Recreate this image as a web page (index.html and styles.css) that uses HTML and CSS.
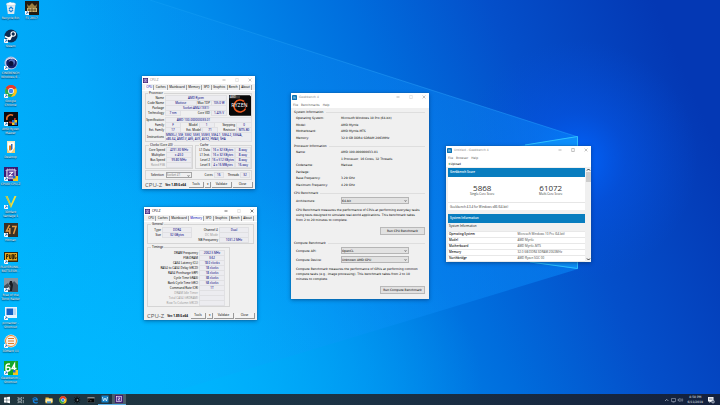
FILE: index.html
```html
<!DOCTYPE html>
<html lang="en">
<head>
<meta charset="utf-8">
<title>Desktop</title>
<link rel="stylesheet" href="styles.css">
</head>
<body>
<svg class="defs" aria-hidden="true">
  <defs>
    <symbol id="arrow" viewBox="0 0 4 4"><rect width="4" height="4" fill="#fff"/><path d="M.8 3.4 2.8 1.2M1.4 1h1.6v1.6" fill="none" stroke="#1767b5" stroke-width=".8"/></symbol>
    <symbol id="min" viewBox="0 0 6 6"><path d="M1.5 3h3" stroke="currentColor" stroke-width=".6"/></symbol>
    <symbol id="max" viewBox="0 0 6 6"><path d="M1.7 1.5h2.6v3H1.7z" fill="none" stroke="currentColor" stroke-width=".5"/></symbol>
    <symbol id="close" viewBox="0 0 6 6"><path d="m1.6 1.6 2.8 2.8m0-2.8L1.6 4.4" stroke="currentColor" stroke-width=".5"/></symbol>
    <symbol id="cpuz" viewBox="0 0 12 12"><rect width="12" height="12" fill="#3b1a70"/><path d="M3 1v10M5 1v10M7 1v10M9 1v10M1 3h10M1 9h10" stroke="#a98fd0" stroke-width=".5"/><rect x="2.5" y="2.5" width="7" height="7" fill="#5a3496" stroke="#fff" stroke-width=".8"/><path d="M4.5 4.5h3l-3 3h3" fill="none" stroke="#fff" stroke-width=".9"/></symbol>
    <symbol id="gb" viewBox="0 0 12 12"><rect width="12" height="12" rx="1" fill="#0b73b5"/><path d="M7.5 2.5 3.5 9M4 3v4h5M7.5 5v5" stroke="#bfe6ff" stroke-width="1" fill="none"/></symbol>
    <symbol id="chrome" viewBox="0 0 24 24"><circle cx="12" cy="12" r="11" fill="#fbc116"/><path d="M12 12 2.5 6.5A11 11 0 0 1 21.5 6.5z" fill="#e33b2e"/><path d="M12 12 2.5 6.5A11 11 0 0 0 12 23l5-8z" fill="#2da94f"/><path d="M12 7h9.8l-.6-1.2A11 11 0 0 0 3 6l4.500 7z" fill="#e33b2e"/><circle cx="12" cy="12" r="5.4" fill="#fff"/><circle cx="12" cy="12" r="4.2" fill="#4285f4"/></symbol>
  </defs>
</svg>
<main class="desktop">
  <svg class="wallpaper" viewBox="0 0 720 405" preserveAspectRatio="none" aria-hidden="true">
    <defs>
      <linearGradient id="base" x1="0" y1=".62" x2="1" y2=".38">
        <stop offset="0" stop-color="#00b3fc"/><stop offset=".2" stop-color="#00a6f8"/><stop offset=".4" stop-color="#008bec"/><stop offset=".6" stop-color="#006ddd"/><stop offset=".78" stop-color="#044fca"/><stop offset="1" stop-color="#0438b4"/>
      </linearGradient>
      <radialGradient id="low" cx=".12" cy=".95" r=".55"><stop offset="0" stop-color="#00b9ff"/><stop offset="1" stop-color="#00b9ff" stop-opacity="0"/></radialGradient>
      <radialGradient id="glow" gradientUnits="userSpaceOnUse" cx="578" cy="160" r="120"><stop offset="0" stop-color="#0066ff" stop-opacity=".95"/><stop offset=".4" stop-color="#0556ea" stop-opacity=".5"/><stop offset="1" stop-color="#0550dc" stop-opacity="0"/></radialGradient>
      <linearGradient id="beam"><stop offset="0" stop-color="#19a9ff" stop-opacity="0"/><stop offset=".5" stop-color="#1595ff" stop-opacity=".16"/><stop offset="1" stop-color="#0890ff" stop-opacity=".5"/></linearGradient>
      <linearGradient id="ray" gradientUnits="userSpaceOnUse" x1="130" y1="0" x2="578" y2="0"><stop offset="0" stop-color="#3cc0ff" stop-opacity=".1"/><stop offset=".6" stop-color="#36b0ff" stop-opacity=".35"/><stop offset="1" stop-color="#20a0ff" stop-opacity=".5"/></linearGradient>
    </defs>
    <rect width="720" height="405" fill="url(#base)"/>
    <rect width="720" height="405" fill="url(#low)"/>
    <rect width="720" height="405" fill="url(#glow)"/>
    <path d="M150 0 578 137V269L130 405H0V0z" fill="url(#beam)"/>
    <path d="M150 0 578 137" fill="none" stroke="url(#ray)" stroke-width="1"/>
    <path d="M500 149 578 136V269L500 258z" fill="#12a0ff" fill-opacity=".6"/>
    <path d="M525 145 577.500 136.500V268.500L530 262" fill="none" stroke="#2fc1ff" stroke-width="1"/>
  </svg>

  <nav class="icons" aria-label="Desktop icons">
    <a class="shortcut" href="#"><svg viewBox="0 0 14 14"><path d="m2.500 3 1.300 10h6.400l1.300-10z" fill="#dfe9ef"/><ellipse cx="7" cy="3" rx="4.700" ry="1.600" fill="#fafcfd" stroke="#a9bdc8" stroke-width=".4"/><path d="m4 3 2-2 2 1.500L10 1.800l.4 1.500z" fill="#fff"/><path d="m5 8 2-2 2 2M9 9l-2 1.800L5 9" fill="none" stroke="#1a84dd" stroke-width="1.200"/></svg><span>Recycle Bin</span></a>
    <a class="shortcut" href="#"><svg viewBox="0 0 14 14"><circle cx="7" cy="7" r="6.500" fill="#0d2b52"/><circle cx="9.200" cy="5" r="2.200" fill="none" stroke="#fff" stroke-width="1.100"/><path d="M1 7.500 5.500 9.700 8 6.800" fill="none" stroke="#fff" stroke-width="1.800"/><circle cx="5.500" cy="9.500" r="1.700" fill="#fff"/><use href="#arrow" y="10" width="4" height="4"/></svg><span>Steam</span></a>
    <a class="shortcut" href="#"><svg viewBox="0 0 14 14"><circle cx="7" cy="7" r="6.500" fill="#aebfe4"/><circle cx="7.500" cy="7" r="5.300" fill="#15206b"/><circle cx="8" cy="6" r="3" fill="#5872bd"/><circle cx="7" cy="7.500" r="2.500" fill="#0b1038"/><path d="M2 4.500C6 1 11 2 13 5" fill="none" stroke="#f4f7ff" stroke-width="1"/><use href="#arrow" y="10" width="4" height="4"/></svg><span>CINEBENCH<br>Windows 6...</span></a>
    <a class="shortcut" href="#"><svg viewBox="0 0 14 14"><use href="#chrome" x="0.500" y="0.500" width="13" height="13"/><use href="#arrow" y="10" width="4" height="4"/></svg><span>Google<br>Chrome</span></a>
    <a class="shortcut" href="#"><svg viewBox="0 0 14 14"><path d="M0 0h14v14H0z" fill="#0c0b10"/><path d="M3 8a4 4 0 0 1 6-4.500" fill="none" stroke="#f0702a" stroke-width="1.600"/><path d="M11 6a4 4 0 0 1-6 4" fill="none" stroke="#d13023" stroke-width="1.600"/><path d="M8 8h5v5H8z" fill="#f4c51c"/><path d="M8 8h2.500v2.500H8zM10.500 10.500H13V13h-2.500z" fill="#1e6ed2"/><use href="#arrow" y="10" width="4" height="4"/></svg><span>AMD Ryzen<br>Master</span></a>
    <a class="shortcut" href="#"><svg viewBox="0 0 14 14"><path d="M3 1h8v12H3z" fill="#f5e9c4"/><path d="M4 2.500h6v9H4z" fill="#fff"/><path d="M5 5.500h2v5H5z" fill="#e48122"/><path d="M7 4h1.500v5L7 10.500z" fill="#3c6aa8"/><path d="m3 8 3 5H3zM11 7v6H7z" fill="#f1ce74"/></svg><span>Desktop</span></a>
    <a class="shortcut" href="#"><svg viewBox="0 0 14 14"><use href="#cpuz" width="14" height="14"/><path d="M9 9h5v5H9z" fill="#f4c51c"/><path d="M9 9h2.500v2.500H9z" fill="#1e6ed2"/><use href="#arrow" y="10" width="4" height="4"/></svg><span>CPUID CPU-Z</span></a>
    <a class="shortcut" href="#"><svg viewBox="0 0 14 14"><path d="M1.500 1 7 13l5.500-12h-2L7 9 3.500 1z" fill="#f3df3b"/><path d="m3 1 4 9v3L1.500 1z" fill="#b9c74b"/><use href="#arrow" y="10" width="4" height="4"/></svg><span>3DMark<br>Vantage 1</span></a>
    <a class="shortcut" href="#"><svg viewBox="0 0 14 14"><path d="M0 0h14v14H0z" fill="#3a3026"/><path d="M5.500 2 2.500 8h4M5.800 5v6M8 3.500h4L9.500 11" fill="none" stroke="#e59b45" stroke-width="1.500"/><use href="#arrow" y="10" width="4" height="4"/></svg><span>Hitman</span></a>
    <a class="shortcut" href="#"><svg viewBox="0 0 14 14"><path d="M0 2h14v10H0z" fill="#332a12"/><path d="M1 3h12v7.500H1z" fill="#e9a91e"/><path d="M2.500 9V4.500H4v2H2.500M5.500 4.500V8.500H7v-4M8.300 9V4.500h1.200V9zM12 4.500h-1.200v4H12V7" fill="none" stroke="#2a1d06" stroke-width=".9"/><use href="#arrow" y="10" width="4" height="4"/></svg><span>PLAYERUNK...<br>BATTLEGR...</span></a>
    <a class="shortcut" href="#"><svg viewBox="0 0 14 14"><path d="M0 0h14v14H0z" fill="#8796a1"/><path d="M0 8 4 5l2 4 4-6 4 4v7H0z" fill="#45525e"/><path d="M6 3h2l1 4-1 6H6l.5-5L5 6z" fill="#191d23"/><path d="m2 11 3-2 1 3z" fill="#dbe5ea"/><use href="#arrow" y="10" width="4" height="4"/></svg><span>Rise of the<br>Tomb Raider</span></a>
    <a class="shortcut" href="#"><svg viewBox="0 0 14 14"><path d="M1 1h12v11H1z" fill="#e8f2fb"/><path d="M2.500 2.500H9V9H2.500z" fill="#1762c4"/><path d="M9 2.500h3V9H9z" fill="#b9d9f5"/><use href="#arrow" y="10" width="4" height="4"/></svg><span>pcmarker -<br>Shortcut</span></a>
    <a class="shortcut" href="#"><svg viewBox="0 0 14 14"><circle cx="7" cy="7" r="6.500" fill="#f4f1e8"/><circle cx="7" cy="7" r="5.500" fill="none" stroke="#e98a35" stroke-width="1"/><path d="M4 4.500h6M4 7h6M4 9.500h6" stroke="#dd7b2b" stroke-width="1.200"/><use href="#arrow" y="10" width="4" height="4"/></svg><span>3DMark 11</span></a>
    <a class="shortcut" href="#"><svg viewBox="0 0 14 14"><path d="M0 0h14v14H0z" fill="#15a52b"/><path d="M6 3H4.500Q2 3 2 6v2.500Q2 10 4 10t2-2-2-1.800-2 1M10.500 10V3L8 7.500h4.500" fill="none" stroke="#fff" stroke-width="1.400"/><path d="M9 9h5v5H9z" fill="#f4c51c"/><path d="M9 9h2.500v2.500H9z" fill="#1e6ed2"/><use href="#arrow" y="10" width="4" height="4"/></svg><span>Geekbench -<br>Shortcut</span></a>
    <a class="shortcut" href="#"><svg viewBox="0 0 14 14"><path d="M0 0h14v14H0z" fill="#211b13"/><path d="m2 3 2 2 3-3 3 3 2-2-1 5H3z" fill="#9d8041"/><path d="M2 7h10v4H2z" fill="#c8b277"/><path d="M3 9h8M4 7.500v3M7 7v4M10 7.500v3" stroke="#4a3715" stroke-width=".7"/><use href="#arrow" y="10" width="4" height="4"/></svg><span>F1 2017</span></a>
  </nav>

  <section class="window cpuz first" aria-label="CPU-Z processor">
    <header class="title idle"><svg class="app"><use href="#cpuz"/></svg><span>CPU-Z</span><svg class="ctl"><use href="#min"/></svg><svg class="ctl faint"><use href="#max"/></svg><svg class="ctl"><use href="#close"/></svg></header>
    <div class="tabs"><button class="on">CPU</button><button>Caches</button><button>Mainboard</button><button>Memory</button><button>SPD</button><button>Graphics</button><button>Bench</button><button>About</button></div>
    <fieldset class="processor">
      <legend>Processor</legend>
      <div class="identity">
        <div class="lines">
          <div class="line"><label>Name</label><output class="grow">AMD Ryzen</output></div>
          <div class="line"><label>Code Name</label><output class="grow">Matisse</output><span>Max TDP</span><output class="small">105.0 W</output></div>
          <div class="line"><label>Package</label><output class="grow">Socket AM4 (1331)</output></div>
          <div class="line"><label>Technology</label><output class="small">7 nm</output><span class="push">Core VID</span><output class="small">1.425 V</output></div>
        </div>
        <svg class="ryzen" viewBox="0 0 66 62" role="img" aria-label="AMD Ryzen"><path d="M0 0h62l4 4v58H4l-4-4z" fill="#090909"/><path d="M0 0h33v10H0z" fill="#3a3a3a"/><text x="3" y="8" font-size="8" fill="#fff">AMD</text><path d="M45 19a18 18 0 1 0 4 22" fill="none" stroke="#ed5a20" stroke-width="5"/><path d="M45 19a18 18 0 0 1 4 22" fill="none" stroke="#b82f12" stroke-width="3"/><text x="7" y="37" font-size="16" fill="#fff">RYZEN</text></svg>
      </div>
      <div class="line gap"><label>Specification</label><output class="grow spec">AMD 100-000000033-01</output></div>
      <div class="line"><label>Family</label><output class="small">F</output><span class="push">Model</span><output class="small">1</output><span class="push">Stepping</span><output class="small">0</output></div>
      <div class="line"><label>Ext. Family</label><output class="small">17</output><span class="push">Ext. Model</span><output class="small">71</output><span class="push">Revision</span><output class="small">MTS-B0</output></div>
      <div class="line tall"><label>Instructions</label><output class="grow wrap">MMX(+), SSE, SSE2, SSE3, SSSE3, SSE4.1, SSE4.2, SSE4A,<br>x86-64, AMD-V, AES, AVX, AVX2, FMA3, SHA</output></div>
    </fieldset>
    <div class="pair">
      <fieldset class="clocks"><legend>Clocks (Core #0)</legend>
        <div class="line"><label>Core Speed</label><output class="grow">4291.30 MHz</output></div>
        <div class="line"><label>Multiplier</label><output class="grow">x 43.0</output></div>
        <div class="line"><label>Bus Speed</label><output class="grow">99.80 MHz</output></div>
        <div class="line off"><label>Rated FSB</label><output class="grow"></output></div>
      </fieldset>
      <fieldset class="cache"><legend>Cache</legend>
        <div class="line"><label>L1 Data</label><output class="grow">16 x 32 KBytes</output><output class="small">8-way</output></div>
        <div class="line"><label>L1 Inst.</label><output class="grow">16 x 32 KBytes</output><output class="small">8-way</output></div>
        <div class="line"><label>Level 2</label><output class="grow">16 x 512 KBytes</output><output class="small">8-way</output></div>
        <div class="line"><label>Level 3</label><output class="grow">4 x 16 MBytes</output><output class="small">16-way</output></div>
      </fieldset>
    </div>
    <div class="selection"><label for="socket">Selection</label><span class="pick"><select id="socket" disabled><option>Socket #1</option></select></span><span class="push">Cores</span><output>16</output><span class="threads">Threads</span><output>32</output></div>
    <footer class="bar"><strong>CPU-Z</strong><span>Ver. 1.89.0.x64</span><button>Tools</button><button class="drop" aria-label="More tools">▾</button><button class="wide">Validate</button><button class="wide">Close</button></footer>
  </section>

  <section class="window cpuz second" aria-label="CPU-Z memory">
    <header class="title"><svg class="app"><use href="#cpuz"/></svg><span>CPU-Z</span><svg class="ctl"><use href="#min"/></svg><svg class="ctl faint"><use href="#max"/></svg><svg class="ctl"><use href="#close"/></svg></header>
    <div class="tabs"><button>CPU</button><button>Caches</button><button>Mainboard</button><button class="on">Memory</button><button>SPD</button><button>Graphics</button><button>Bench</button><button>About</button></div>
    <fieldset class="general"><legend>General</legend>
      <div class="line"><label>Type</label><output>DDR4</output><span class="push">Channel #</span><output>Dual</output></div>
      <div class="line"><label>Size</label><output>32 GBytes</output><span class="push off">DC Mode</span><output></output></div>
      <div class="line"><span class="push">NB Frequency</span><output>1031.2 MHz</output></div>
    </fieldset>
    <fieldset class="timings"><legend>Timings</legend>
      <div class="line"><label>DRAM Frequency</label><output>2062.5 MHz</output></div>
      <div class="line"><label>FSB:DRAM</label><output>3:62</output></div>
      <div class="line"><label>CAS# Latency (CL)</label><output>18.0 clocks</output></div>
      <div class="line"><label>RAS# to CAS# Delay (tRCD)</label><output>18 clocks</output></div>
      <div class="line"><label>RAS# Precharge (tRP)</label><output>18 clocks</output></div>
      <div class="line"><label>Cycle Time (tRAS)</label><output>38 clocks</output></div>
      <div class="line"><label>Bank Cycle Time (tRC)</label><output>58 clocks</output></div>
      <div class="line"><label>Command Rate (CR)</label><output>1T</output></div>
      <div class="line off"><label>DRAM Idle Timer</label><output></output></div>
      <div class="line off"><label>Total CAS# (tRDRAM)</label><output></output></div>
      <div class="line off"><label>Row To Column (tRCD)</label><output></output></div>
    </fieldset>
    <footer class="bar"><strong>CPU-Z</strong><span>Ver. 1.89.0.x64</span><button>Tools</button><button class="drop" aria-label="More tools">▾</button><button class="wide">Validate</button><button class="wide">Close</button></footer>
  </section>

  <section class="window geek" aria-label="Geekbench 4">
    <header class="title idle"><svg class="app"><use href="#gb"/></svg><span>Geekbench 4</span><svg class="ctl"><use href="#min"/></svg><svg class="ctl faint"><use href="#max"/></svg><svg class="ctl"><use href="#close"/></svg></header>
    <div class="menu"><span>File</span><span>Benchmarks</span><span>Help</span></div>
    <div class="panel">
      <h2>System Information</h2>
      <dl class="four"><dt>Operating System:</dt><dd>Microsoft Windows 10 Pro (64-bit)</dd><dt>Model:</dt><dd>AMD Myrtle</dd><dt>Motherboard:</dt><dd>AMD Myrtle-MTS</dd><dt>Memory:</dt><dd>32.0 GB DDR4 SDRAM 2063MHz</dd></dl>
      <h2>Processor Information</h2>
      <dl class="six"><dt>Name:</dt><dd>AMD 100-000000033-01</dd><dt></dt><dd>1 Processor, 16 Cores, 32 Threads</dd><dt>Codename:</dt><dd>Matisse</dd><dt>Package:</dt><dd></dd><dt>Base Frequency:</dt><dd>3.29 GHz</dd><dt>Maximum Frequency:</dt><dd>4.29 GHz</dd></dl>
      <h2>CPU Benchmark</h2>
      <div class="choice"><label for="arch">Architecture:</label><span class="pick"><select id="arch"><option>64-bit</option></select></span></div>
      <p>CPU Benchmark measures the performance of CPUs at performing everyday tasks<br>using tests designed to simulate real-world applications. This benchmark takes<br>from 2 to 20 minutes to complete.</p>
      <button class="run">Run CPU Benchmark</button>
      <h2>Compute Benchmark</h2>
      <div class="choice"><label for="api">Compute API:</label><span class="pick"><select id="api"><option>OpenCL</option></select></span></div>
      <div class="choice"><label for="dev">Compute Device:</label><span class="pick"><select id="dev"><option>Unknown AMD GPU</option></select></span></div>
      <p>Compute Benchmark measures the performance of GPUs at performing common<br>compute tasks (e.g., image processing). This benchmark takes from 2 to 10<br>minutes to complete.</p>
      <button class="run">Run Compute Benchmark</button>
    </div>
  </section>

  <section class="window result" aria-label="Geekbench result">
    <header class="title idle"><svg class="app"><use href="#gb"/></svg><span>Untitled - Geekbench 4</span><svg class="ctl"><use href="#min"/></svg><svg class="ctl"><use href="#max"/></svg><svg class="ctl"><use href="#close"/></svg></header>
    <div class="menu"><span>File</span><span>Browser</span><span>Help</span></div>
    <div class="upload"><i>⬆</i>Upload</div>
    <div class="view">
      <div class="page">
        <h3>Geekbench Score</h3>
        <div class="scores"><div><b>5868</b><span>Single-Core Score</span></div><div><b>61072</b><span>Multi-Core Score</span></div></div>
        <div class="note">Geekbench 4.3.4 for Windows x86 (64-bit)</div>
        <h3>System Information</h3>
        <table><thead><tr><th colspan="2">System Information</th></tr></thead><tbody><tr><th>Operating System</th><td>Microsoft Windows 10 Pro (64-bit)</td></tr><tr><th>Model</th><td>AMD Myrtle</td></tr><tr><th>Motherboard</th><td>AMD Myrtle-MTS</td></tr><tr><th>Memory</th><td>32.0 GB DDR4 SDRAM 2063MHz</td></tr><tr><th>Northbridge</th><td>AMD Ryzen SOC 00</td></tr></tbody></table>
      </div>
      <div class="scroll"><svg viewBox="0 0 5 5"><path d="m1 3.500 1.500-1.500L4 3.500" fill="none" stroke="#333" stroke-width="1"/></svg><i></i><svg viewBox="0 0 5 5"><path d="m1 1.500 1.500 1.500L4 1.500" fill="none" stroke="#333" stroke-width="1"/></svg></div>
    </div>
  </section>
</main>

<footer class="taskbar">
  <button aria-label="Start"><svg viewBox="0 0 8 8"><path d="M1 1.600 3.700 1.200v2.600H1zM4.100 1.100 7 .8v3H4.100zM1 4.200h2.700v2.600L1 6.400zM4.100 4.200H7v3l-2.900-.4z" fill="#fff"/></svg></button>
  <button aria-label="Task view"><svg viewBox="0 0 8 8"><path d="M1 1v1.200h3.500V1M1 3.200h3.500v2H1zM1 7.200V6.200h3.500v1M6.300 1v2M6.300 4v3.200" fill="none" stroke="#b5bfc4" stroke-width=".7"/></svg></button>
  <button aria-label="Edge"><svg viewBox="0 0 8 8"><path d="M1 3.800C1.500.2 7 .2 7 4.400H3.100c0 2 2.200 2.200 3.600 1.300v1.400C4 8.400 1.400 7 1.800 4.600 2 3.400 3 3 3.400 2.800L3.200 3.300h2.100C5 1.600 2.600 1.800 1 3.800z" fill="#1683e0"/></svg></button>
  <button aria-label="File Explorer"><svg viewBox="0 0 8 8"><path d="M.5 1.500h3l.6.700h3.400v5h-7z" fill="#f0c14a"/><path d="M.5 3.200h7V6h-7z" fill="#fde9a6"/><path d="M2 5.300h4v1.900H2z" fill="#4b9bd8"/></svg></button>
  <button aria-label="Chrome"><svg><use href="#chrome"/></svg></button>
  <button aria-label="Utility"><svg viewBox="0 0 8 8"><path d="M4 .5v7M.8 4h6.400M1.500 1.500l5 5M6.500 1.500l-5 5" stroke="#070b0d" stroke-width=".9"/><circle cx="4" cy="4" r="2" fill="#090d10"/><circle cx="4.500" cy="4" r=".8" fill="#a4adb1"/></svg></button>
  <button aria-label="Command Prompt"><svg viewBox="0 0 8 8"><path d="M.5 1.500h7v5h-7z" fill="#050505" stroke="#70777b" stroke-width=".3"/><path d="M.5 1.500h7v.8h-7z" fill="#ddd"/><path d="m1.500 3.300.8.600-.8.600M3 4.800h1.500" fill="none" stroke="#ccc" stroke-width=".4"/></svg></button>
  <button class="open" aria-label="Geekbench"><svg viewBox="0 0 8 8"><path d="M.5.500h7v7h-7z" fill="#1481c9"/><path d="m1.500 2 1 4L4 3l1.500 3 1-4" fill="none" stroke="#e6f6ff" stroke-width=".8"/></svg></button>
  <button class="open active" aria-label="CPU-Z"><svg><use href="#cpuz"/></svg></button>
  <div class="tray">
    <svg viewBox="0 0 20 6"><path d="m1 4 1.700-1.700L4.400 4" fill="none" stroke="#cbd3df" stroke-width=".6"/><path d="M7.500 1.500h4v3h-4zM8.500 5.200h2" fill="none" stroke="#b4bfd0" stroke-width=".5"/><path d="M14 2.300h1l1-1v3.400l-1-1h-1zM17 2q1 1 0 2M18 1.300q1.800 1.700 0 3.400" fill="none" stroke="#b4bfd0" stroke-width=".5"/></svg>
    <time>8:50 PM<br>6/11/2019</time>
    <svg class="notify" viewBox="0 0 8 8"><path d="M1 1h5.500v4.500H4L2.500 7V5.500H1z" fill="#f3f5f8"/><path d="M2 2.300h3.500M2 3.500h3.500" stroke="#34435f" stroke-width=".4"/><circle cx="6" cy="5.800" r="1.700" fill="#aab3c3"/><circle cx="6" cy="5.800" r=".7" fill="#26324c"/></svg>
  </div>
</footer>
</body>
</html>
```

FILE: styles.css
```css
* { box-sizing: border-box; }
body {
  margin: 0;
  height: 100vh;
  display: grid;
  grid-template-rows: 1fr 11px;
  overflow: hidden;
  font: 3px/4px "DejaVu Sans", "Noto Sans", sans-serif;
  color: #000;
  white-space: nowrap;
  background: #0069d9;
}
button, select, output, fieldset, legend, input {
  font: inherit;
  color: inherit;
  margin: 0;
  padding: 0;
  border: 0;
  min-width: 0;
}
h2, h3, p, dl, dd { margin: 0; font: inherit; }
.defs { position: absolute; width: 0; height: 0; }
.desktop { position: relative; min-height: 0; }
.wallpaper { position: absolute; left: 0; top: 0; width: 100%; height: 100vh; }

/* Desktop shortcuts */
.icons {
  position: relative;
  height: 100%;
  width: max-content;
  display: grid;
  grid-auto-flow: column;
  grid-template-rows: repeat(14, 1fr);
  grid-auto-columns: 21px;
  padding-top: 1px;
  padding-bottom: 5px;
}
.shortcut {
  display: flex;
  flex-direction: column;
  align-items: center;
  gap: 1px;
  color: #fff;
  text-align: center;
  text-decoration: none;
  text-shadow: 0 0 1px #00324f, 0 1px 1px #00324f;
}
.shortcut svg { width: 14px; height: 14px; flex: none; }

/* Windows */
.window {
  position: absolute;
  background: #f0f0f0;
  box-shadow: 0 0 1px #1a5f92, 0 1px 4px rgba(0, 20, 60, .45);
}
.first { left: 142px; top: 76px; width: 113px; }
.second { left: 144px; top: 207px; width: 113px; }
.geek { left: 291px; top: 93px; width: 138px; }
.result { left: 446px; top: 146px; width: 145px; }
.title {
  height: 8px;
  display: flex;
  align-items: center;
  background: #fff;
  padding-left: 1px;
  padding-right: 2px;
}
.title span { flex: 1; padding-left: 2px; }
.title.idle { color: #888; }
.app { width: 5px; height: 5px; }
.ctl { width: 6px; height: 6px; margin-left: 7px; }
.faint { color: #ccc; }
.menu { height: 7px; display: flex; align-items: center; gap: 3px; padding-left: 2px; background: #fff; color: #555; }

/* CPU-Z */
.cpuz { height: 113px; display: flex; flex-direction: column; font-family: "Noto Sans", "Open Sans", sans-serif; }
.cpuz output {
  height: 4px;
  line-height: 4px;
  text-align: center;
  color: #00007c;
  background: #ececf0;
  box-shadow: 0 0 0 1px #e0e0e3;
}
.tabs { height: 7px; display: flex; justify-content: space-between; padding: 1px 3px 0; border-bottom: 1px solid #fff; }
.tabs button { flex: auto; background: none; border-right: 1px solid #a5a5a5; line-height: 5px; }
.tabs .on { color: #0000b4; background: #fafafa; }
.cpuz fieldset { border: 1px solid #d5d5d5; margin: 0 3px; }
.cpuz legend { height: 4px; margin-left: 2px; padding: 0 1px; }
.line { display: flex; align-items: center; gap: 2px; height: 5px; }
.line label { width: 18px; text-align: right; flex: none; }
.grow { flex: 1; }
.small { width: 14px; flex: none; }
.push { margin-left: auto; }
.off, .off label { color: #999; }
.processor { height: 51px; }
.identity { display: flex; gap: 3px; }
.lines { flex: 1; }
.ryzen { width: 22px; height: 21px; font-family: "Open Sans", sans-serif; }
.gap { margin-top: 1px; }
.cpuz .spec { padding-right: 30px; }
.tall { height: 9px; }
.cpuz .wrap { height: 8px; text-align: left; }
.pair { display: grid; grid-template-columns: 48px 1fr; gap: 2px; margin: 1px 3px 0; }
.cpuz .pair fieldset { margin: 0; padding: 0 1px 1px; }
.cache .line label { width: 13px; }
.selection { display: flex; align-items: center; height: 10px; margin: 1px 3px 0; padding: 0 2px 0 5px; gap: 2px; border: 1px solid #d5d5d5; }
.selection output { width: 8px; }
.threads { margin-left: 3px; }
.pick { position: relative; width: 26px; display: flex; }
.pick::after {
  content: "";
  position: absolute;
  right: 2px;
  top: 2px;
  width: 2px;
  height: 2px;
  border: solid #777;
  border-width: 0 1px 1px 0;
  transform: rotate(45deg) scale(.6);
}
.pick select {
  appearance: none;
  width: 100%;
  height: 6px;
  border: 1px solid #a5a5a5;
  background: #f0f0f0;
  line-height: 4px;
  opacity: 1;
}
.pick select:disabled { color: #777; }
.bar { margin-top: auto; height: 8px; display: flex; align-items: center; gap: 1px; padding: 0 2px 1px 3px; }
.bar strong { font: 6px/6px "Open Sans", sans-serif; color: #555; }
.bar span { flex: 1; text-align: center; font-weight: bold; }
.bar button { width: 15px; height: 6px; line-height: 5px; background: #f3f3f3; border: solid #999; border-width: 0 1px 1px 0; }
.bar .drop { width: 6px; }
.bar .wide { width: 20px; }
.second .line label { width: 12px; }
.general output { width: 28px; }
.cpuz .general { padding: 1px 5px 1px 1px; }
.cpuz .timings { width: 83px; margin-left: 3px; margin-top: 1px; padding: 1px 5px 1px 1px; }
.second .timings label { flex: 1; width: auto; }
.timings output { width: 24px; }

/* Geekbench */
.panel { display: flex; flex-direction: column; padding: 2px 4px 5px 3px; }
.panel h2 { line-height: 4px; margin-bottom: 1px; display: flex; align-items: center; gap: 2px; }
.panel h2::after { content: ""; flex: 1; height: 1px; background: #dedede; }
.panel dl { display: grid; grid-template-columns: 45px 1fr; align-items: center; padding-left: 2px; margin-bottom: 3px; }
.four { height: 26px; grid-template-rows: repeat(4, 1fr); }
.six { height: 39px; grid-template-rows: repeat(6, 1fr); }
.choice { display: grid; grid-template-columns: 45px 68px; align-items: center; height: 9px; padding-left: 2px; }
.choice .pick { width: auto; }
.choice select { background: #e2e2e2; border-color: #b5b5b5; height: 7px; }
.panel p { line-height: 5px; padding: 3px 2px 4px; }
.run { align-self: flex-end; width: 45px; height: 8px; line-height: 6px; background: #e1e1e1; border: 1px solid #b9b9b9; margin-bottom: 6px; }
.run:last-child { margin-bottom: 0; }

/* Result */
.upload { height: 6px; line-height: 6px; padding-left: 2px; background: #fff; }
.upload i { color: #3a9c3a; font-style: normal; }
.view { height: 95px; display: grid; grid-template-columns: 1fr 5px; overflow: hidden; }
.page { padding: 1px 1px 0 2px; font-family: "Open Sans", "Noto Sans", sans-serif; }
.page h3 { height: 9px; line-height: 9px; padding-left: 2px; background: #087dbf; color: #fff; font-weight: 600; }
.scores { height: 25px; display: grid; grid-template-columns: 1fr 1fr; text-align: center; background: #fff; padding-top: 6px; }
.scores b, .scores span { display: block; }
.scores b { font-size: 8px; font-weight: normal; line-height: 9px; color: #333; }
.scores span { color: #333; }
.note { height: 8px; line-height: 8px; padding-left: 2px; background: #fff; color: #333; border-top: 1px solid #e6e6e6; margin-bottom: 4px; }
.page table { width: 100%; border-collapse: collapse; table-layout: fixed; background: #fff; }
.page th, .page td { height: 6px; padding: 0 0 0 1px; text-align: left; line-height: 5px; border-bottom: 1px solid #e8e8e8; }
.page td { color: #444; }
.page tbody th { width: 36%; font-weight: 600; color: #111; }
.page thead th { background: #f1f1f1; font-weight: normal; height: 8px; }
.scroll { display: flex; flex-direction: column; background: #f0f0f0; }
.scroll svg { width: 5px; height: 5px; }
.scroll i { height: 10px; background: #cdcdcd; margin-bottom: auto; }

/* Taskbar */
.taskbar { position: relative; display: flex; align-items: stretch; background: linear-gradient(90deg, #20363f, #1c3345 45%, #14213d); }
.taskbar button { width: 14px; display: grid; place-items: center; background: none; }
.taskbar button svg { width: 8px; height: 8px; }
.taskbar .open { border-bottom: 1px solid #5fb2e8; }
.taskbar .active { background: #4b5d6b; }
.tray { margin-left: auto; display: flex; align-items: center; gap: 4px; padding-right: 5px; color: #e6ebf3; text-align: center; }
.tray svg { width: 20px; height: 6px; }
.tray time { line-height: 5px; }
.tray .notify { width: 8px; height: 8px; }
```
